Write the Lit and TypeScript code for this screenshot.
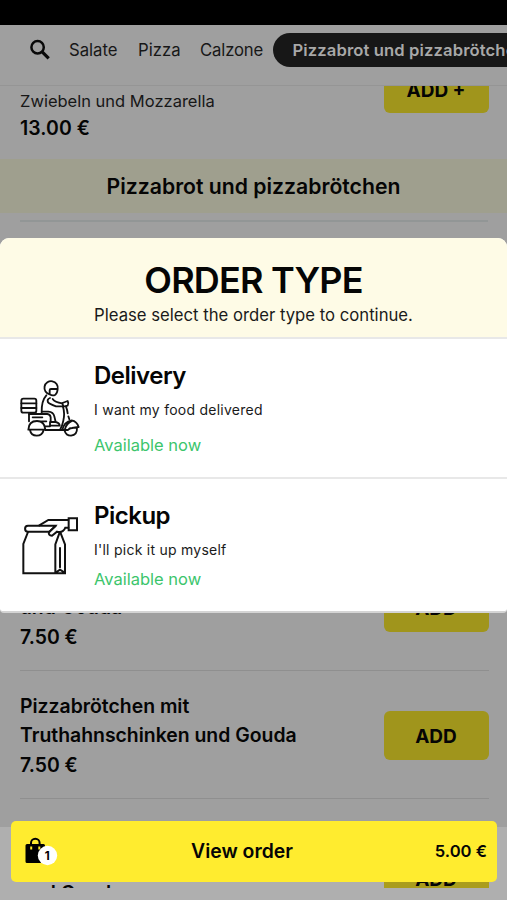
import { LitElement, html, css, svg } from "lit";
import { customElement } from "lit/decorators.js";

interface Dish {
  lines: string[];
  price: string;
}

const dishes: Dish[] = [
  { lines: ["Pizzabrötchen mit Salami", "und Gouda"], price: "7.50 €" },
  { lines: ["Pizzabrötchen mit", "Truthahnschinken und Gouda"], price: "7.50 €" },
];

const scooter = svg`
  <rect x="34" y="83" width="45" height="42" rx="6" />
  <path d="M34 97h45M34 111h45" />
  <path d="M119 70a20 20 0 1 1 24-16h-20q-4 0-4 4v12q9 6 17 1 6-4 7-17" />
  <path d="M109 73q-15 16-14 52" />
  <path d="M128 84q7 10 28 13M120 81q-10 4-6 13 3 5 24 12h22" />
  <path d="M157 96l16-6q4 7 0 14l-13 3z" />
  <path d="M159 107q6 20 1 42-3 16-10 28M168 107q4 10 5 20M175 136l3 9" />
  <path d="M57 129h55q9 1 10 10v15M96 122h19q15 1 18 14l4 17h-17v11h29q0-8-12-11" />
  <path d="M57 129v22M68 139h29M95 151h14" />
  <path d="M55 176q1-26 26-26 23 0 25 26zM60 177q3 17 20 17t21-17M106 177h52M104 166h16" />
  <path d="M157 177q5-25 28-29 16 3 21 20l-20 3q-8 0-12 6zM164 179q4 15 19 15 19-2 18-23M187 149q-18 9-22 25" />
`;

const bag = svg`
  <path d="M119 77H54a8.700 8.700 0 0 1 0-17.500h82l-17 17.500" />
  <path d="M54 78L40 114v88h125v-87l-14-36M149 79l-13 36v87M150 126v58M137 200l13-9 14 9" />
  <path d="M88 58l27-16h60M137 60l-20 18q-3 10 9 11l15-12q18 5 25-12h9" />
  <path d="M176 37h25v36h-25z" />
`;

@customElement("app-root")
export class AppRoot extends LitElement {
  static styles = css`
    :host {
      display: block;
      width: 507px;
      height: 900px;
      font-family: Inter, "Liberation Sans", sans-serif;
      color: #050505;
    }
    * { box-sizing: border-box; }
    .screen {
      position: relative;
      display: flex;
      flex-direction: column;
      height: 900px;
      overflow: hidden;
      background: #9f9f9f;
    }
    .status { flex: none; height: 25px; background: #000; }
    .tabs {
      flex: none;
      display: flex;
      align-items: center;
      height: 61px;
      padding: 0 0 11px 29px;
      border-bottom: 1px solid #959595;
      white-space: nowrap;
      overflow: hidden;
      font-size: 16.7px;
      color: #171717;
    }
    .search { flex: none; width: 22px; height: 22px; margin-right: 18px; }
    .tab { flex: none; width: 49px; margin-right: 20px; }
    .tab.pizza { width: 42px; }
    .tab.calzone { width: 63px; margin-right: 10px; letter-spacing: -0.15px; }
    .active {
      flex: none;
      width: 260px;
      height: 34px;
      line-height: 34px;
      padding-left: 19.5px;
      border-radius: 17px;
      background: #171717;
      color: #a8a8a8;
      font-weight: 600;
      font-size: 16.6px;
      letter-spacing: 0.12px;
    }
    .list { flex: none; height: 802px; overflow: hidden; }
    .first {
      display: flex;
      justify-content: space-between;
      height: 73px;
      padding: 0 18.5px 0 20px;
    }
    .desc { font-size: 16.5px; line-height: 30px; color: #171717; }
    .price { font-size: 19.4px; font-weight: 600; line-height: 29.5px; }
    .first .price { line-height: 25px; letter-spacing: 0.1px; }
    .add {
      flex: none;
      width: 105px;
      height: 49px;
      line-height: 51px;
      border-radius: 6px;
      background: #a0951c;
      text-align: center;
      font-weight: 700;
      font-size: 19px;
    }
    .first .add { margin-top: -22px; line-height: 53px; }
    .category {
      height: 54px;
      line-height: 54px;
      background: #9f9f8e;
      text-align: center;
      font-size: 21.2px;
      font-weight: 600;
    }
    .rule { height: 2px; margin: 7px 19px 0 20px; background: #929696; }
    .dishes { padding-top: 321px; }
    .dish {
      display: flex;
      justify-content: space-between;
      align-items: center;
      height: 128px;
      margin: 0 18.5px 0 20px;
      border-bottom: 1px solid #8f8f8f;
    }
    .dish .add { margin-top: 1px; }
    .info { padding-top: 3px; }
    .name { font-size: 19.4px; font-weight: 600; line-height: 29.3px; white-space: nowrap; }
    .footer-shade {
      position: absolute;
      left: 0;
      right: 0;
      top: 827px;
      height: 73px;
      background: #afafaf;
    }
    .peek {
      display: flex;
      justify-content: space-between;
      height: 61px;
      overflow: hidden;
      padding: 0 18.5px 0 20px;
    }
    .peek .name { margin-top: 52px; }
    .peek .add { margin-top: 27px; border-radius: 6px; background: #aa9d1c; }
    .order {
      position: absolute;
      left: 11px;
      top: 821px;
      width: 486px;
      height: 61px;
      display: grid;
      grid-template-columns: 1fr auto 1fr;
      align-items: center;
      padding: 0 10px 1px 14px;
      border-radius: 5px;
      background: #ffec2f;
    }
    .cart { display: block; width: 34px; height: 30px; }
    .count { font: 700 11.5px Inter, sans-serif; }
    .view { font-size: 19.4px; font-weight: 600; margin-right: 28px; }
    .total { font-size: 16.6px; font-weight: 600; text-align: right; }
    .modal {
      position: absolute;
      left: 0;
      right: 0;
      top: 238px;
      height: 375px;
      border-radius: 9px 9px 4px 4px;
      border-bottom: 2px solid #d4d4d4;
      background: #fff;
      overflow: hidden;
    }
    .head {
      height: 101px;
      padding-top: 18px;
      background: #fefbe6;
      border-bottom: 2px solid #e8e8e8;
      text-align: center;
    }
    .title { font-size: 36px; line-height: 48px; font-weight: 600; letter-spacing: -0.8px; }
    .sub { font-size: 16.7px; line-height: 23px; color: #1a1a1a; }
    .option {
      display: grid;
      grid-template-columns: 84px 1fr;
      height: 140px;
      padding: 22px 0 0 10px;
      border-bottom: 2px solid #e8e8e8;
    }
    .option.last { border: 0; }
    .icon {
      width: 80px;
      height: 75px;
      margin-top: 10px;
      fill: none;
      stroke: #111;
      stroke-width: 5.5;
      stroke-linecap: round;
      stroke-linejoin: round;
    }
    .last .icon { margin-top: 4.5px; stroke-width: 6; stroke-linejoin: miter; }
    .label { font-size: 24px; font-weight: 600; line-height: 30px; letter-spacing: -0.5px; }
    .note { font-size: 14px; line-height: 20px; margin-top: 9px; color: #1a1a1a; letter-spacing: 0.25px; }
    .avail { font-size: 16.5px; line-height: 22px; margin-top: 14px; color: #3cc56c; }
    .last .avail { margin-top: 8px; }
    span { display: inline-block; white-space: nowrap; }
  `;

  render() {
    return html`
      <div class="screen">
        <div class="status"></div>
        <div class="tabs">
          <svg class="search" viewBox="0 0 22 22" fill="none" stroke="#090909">
            <circle cx="8.6" cy="8.2" r="6.2" stroke-width="2.5" />
            <path d="M13.2 12.8l6.5 6.5" stroke-width="3.2" />
          </svg>
          <div class="tab"><span>Salate</span></div>
          <div class="tab pizza"><span>Pizza</span></div>
          <div class="tab calzone"><span>Calzone</span></div>
          <div class="active"><span>Pizzabrot und pizzabrötchen</span></div>
        </div>
        <div class="list">
          <div class="first">
            <div>
              <div class="desc"><span>Zwiebeln und Mozzarella</span></div>
              <div class="price"><span>13.00 €</span></div>
            </div>
            <div class="add">ADD +</div>
          </div>
          <div class="category"><span>Pizzabrot und pizzabrötchen</span></div>
          <div class="rule"></div>
          <div class="dishes">
            ${dishes.map(
              (d) => html`<div class="dish">
                <div class="info">
                  ${d.lines.map((l) => html`<div class="name"><span>${l}</span></div>`)}
                  <div class="price"><span>${d.price}</span></div>
                </div>
                <div class="add">ADD</div>
              </div>`
            )}
          </div>
        </div>
        <div class="footer-shade">
          <div class="peek">
            <div class="name"><span>und Gouda</span></div>
            <div class="add">ADD</div>
          </div>
        </div>
        <div class="order">
          <svg class="cart" viewBox="0 0 34 30">
            <path d="M2 8h16.500a1.500 1.500 0 0 1 1.500 1.500V27H2a1.500 1.500 0 0 1-1.500-1.500v-16A1.500 1.500 0 0 1 2 8z" />
            <path d="M6 9.500V7a4.300 4.300 0 0 1 8.600 0v2.500" fill="none" stroke="#000" stroke-width="2" />
            <path d="M6.200 10.500v3M14.300 10.500v3" stroke="#ffec2f" stroke-width="2" />
            <circle cx="22.5" cy="19.5" r="9.7" fill="#fff" />
            <text class="count" x="22.3" y="23.8" text-anchor="middle">1</text>
          </svg>
          <div class="view"><span>View order</span></div>
          <div class="total"><span>5.00 €</span></div>
        </div>
        <div class="modal">
          <div class="head">
            <div class="title"><span>ORDER TYPE</span></div>
            <div class="sub"><span>Please select the order type to continue.</span></div>
          </div>
          <div class="option">
            <svg class="icon" viewBox="0 0 240 225">${scooter}</svg>
            <div>
              <div class="label"><span>Delivery</span></div>
              <div class="note"><span>I want my food delivered</span></div>
              <div class="avail"><span>Available now</span></div>
            </div>
          </div>
          <div class="option last">
            <svg class="icon" viewBox="0 0 240 225">${bag}</svg>
            <div>
              <div class="label"><span>Pickup</span></div>
              <div class="note"><span>I'll pick it up myself</span></div>
              <div class="avail"><span>Available now</span></div>
            </div>
          </div>
        </div>
      </div>
    `;
  }
}
